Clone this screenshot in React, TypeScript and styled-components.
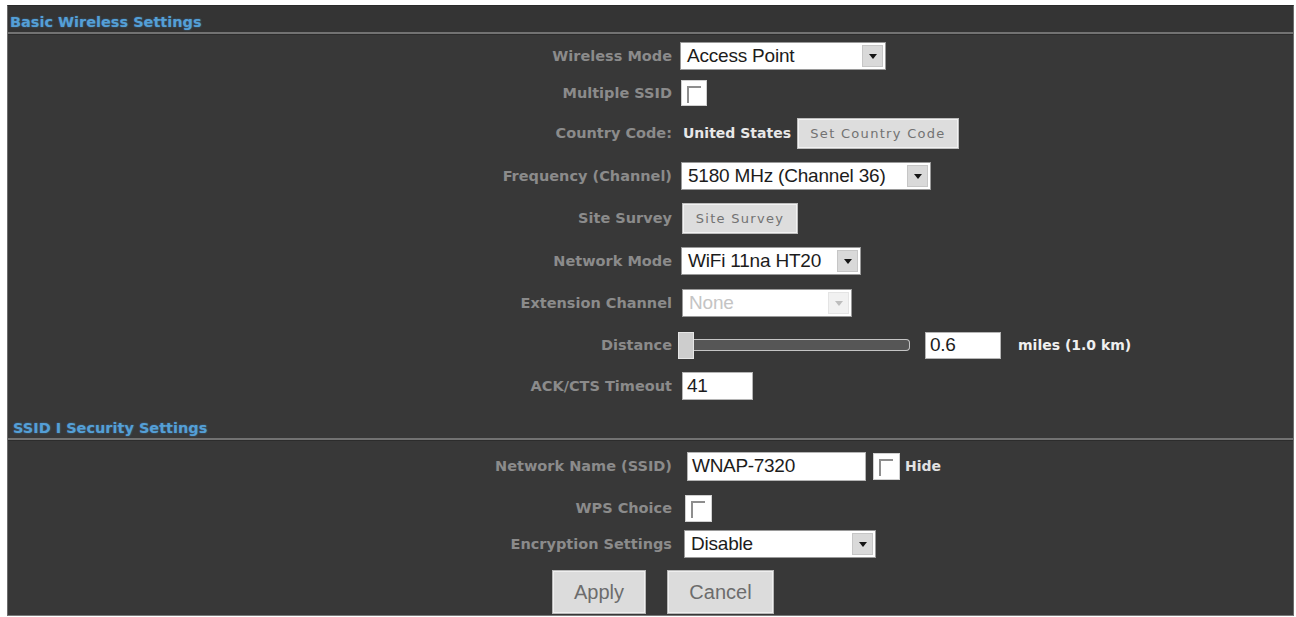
import React from "react";
import styled, { createGlobalStyle } from "styled-components";

const Global = createGlobalStyle`
  html, body { margin: 0; padding: 0; background: #ffffff; }
  body { font-family: "DejaVu Sans", Verdana, sans-serif; }
  * { box-sizing: border-box; }
`;

const Frame = styled.div`
  width: 1296px;
  height: 617px;
  padding: 5px 2px 1px 7px;
  background: #ffffff;
`;

const Panel = styled.div`
  height: 100%;
  background: #383838;
  border-top: 1px solid #2a2a2a;
  border-left: 1px solid #6c6c6c;
  border-right: 1px solid #6c6c6c;
  border-bottom: 1px solid #7a7a7a;
  display: flex;
  flex-direction: column;
`;

const SectionHeader = styled.div<{ $h: number; $pt: number; $indent: number; $bg?: string }>`
  height: ${(p) => p.$h}px;
  padding-top: ${(p) => p.$pt}px;
  padding-left: ${(p) => p.$indent}px;
  background: ${(p) => p.$bg || "transparent"};
  border-bottom: 2px solid #727272;
  box-shadow: 0 1px 0 #2c2c2c;
  font-weight: bold;
  font-size: 14.5px;
  line-height: 19px;
  color: #549fd6;
  text-shadow: 0 0 2px rgba(70, 150, 215, 0.55);
`;

const Row = styled.div<{ $h: number }>`
  height: ${(p) => p.$h}px;
  display: grid;
  grid-template-columns: 664px auto;
  column-gap: 9px;
  align-items: center;
`;

const Label = styled.div`
  text-align: right;
  font-weight: bold;
  font-size: 14.5px;
  color: #8b8b8b;
  white-space: nowrap;
`;

const Controls = styled.div<{ $offset?: number; $gap?: number }>`
  display: flex;
  align-items: center;
  gap: ${(p) => p.$gap ?? 0}px;
  margin-left: ${(p) => p.$offset ?? 0}px;
`;

const SelectBox = styled.div<{ $w: number; $disabled?: boolean }>`
  width: ${(p) => p.$w}px;
  height: 28px;
  background: #ffffff;
  border: 1px solid #9a9a9a;
  display: flex;
  align-items: center;
  padding: 2px;
  font-family: "Liberation Sans", Arial, sans-serif;
  font-size: 19px;
  color: ${(p) => (p.$disabled ? "#c4c4c4" : "#1c1c1c")};
`;

const SelectValue = styled.span`
  flex: 1;
  padding-left: 4px;
  white-space: nowrap;
  overflow: hidden;
  letter-spacing: -0.2px;
`;

const ArrowBox = styled.span<{ $disabled?: boolean }>`
  width: 21px;
  height: 100%;
  background: ${(p) => (p.$disabled ? "#f1f1f1" : "#d9d9d9")};
  border: 1px solid ${(p) => (p.$disabled ? "#e4e4e4" : "#c6c6c6")};
  display: flex;
  align-items: center;
  justify-content: center;
`;

const TextInput = styled.div<{ $w: number; $h?: number }>`
  width: ${(p) => p.$w}px;
  height: ${(p) => p.$h ?? 28}px;
  background: #ffffff;
  border: 1px solid #b5b5b5;
  display: flex;
  align-items: center;
  padding-left: 4px;
  font-family: "Liberation Sans", Arial, sans-serif;
  font-size: 19px;
  color: #1c1c1c;
  letter-spacing: -0.3px;
`;

const Check = styled.span<{ $size?: number }>`
  position: relative;
  display: inline-block;
  width: ${(p) => p.$size ?? 26}px;
  height: ${(p) => p.$size ?? 26}px;
  background: #ffffff;
  border: 1px solid #d0d0d0;
  &::before {
    content: "";
    position: absolute;
    left: 5px;
    top: 5px;
    width: 48%;
    height: 62%;
    border-top: 2px solid #8e8e8e;
    border-left: 2px solid #8e8e8e;
  }
`;

const Strong = styled.span<{ $color?: string; $ml?: number }>`
  font-weight: bold;
  font-size: 14px;
  color: ${(p) => p.$color || "#e8e8e8"};
  margin-left: ${(p) => p.$ml ?? 0}px;
  white-space: nowrap;
`;

const SmallButton = styled.button<{ $w: number }>`
  width: ${(p) => p.$w}px;
  height: 29px;
  background: #dddddd;
  border: 1px solid #f2f2f2;
  outline: 1px solid #bdbdbd;
  font-family: "DejaVu Sans", Verdana, sans-serif;
  font-size: 13px;
  letter-spacing: 1.3px;
  color: #727272;
  padding: 0;
`;

const SliderWrap = styled.div`
  display: flex;
  align-items: center;
`;

const SliderHandle = styled.span`
  width: 16px;
  height: 27px;
  background: #cdcdcd;
  border: 1px solid #e6e6e6;
`;

const SliderTrack = styled.span`
  width: 216px;
  height: 12px;
  background: #565656;
  border: 1px solid #c4c4c4;
  border-left: none;
  border-radius: 0 4px 4px 0;
`;

const ButtonRow = styled.div`
  display: flex;
  gap: 23px;
  padding-left: 545px;
  padding-top: 7px;
`;

const BigButton = styled.button<{ $w: number }>`
  width: ${(p) => p.$w}px;
  height: 42px;
  background: #dcdcdc;
  border: 1px solid #efefef;
  outline: 1px solid #b8b8b8;
  font-family: "Liberation Sans", Arial, sans-serif;
  font-size: 20px;
  color: #6c6c6c;
  padding: 0;
`;

const Arrow = ({ disabled }: { disabled?: boolean }) => (
  <svg width="8" height="5" viewBox="0 0 8 5">
    <path d="M0 0 H8 L4 5 Z" fill={disabled ? "#bdbdbd" : "#151515"} />
  </svg>
);

const Select = ({ w, value, disabled }: { w: number; value: string; disabled?: boolean }) => (
  <SelectBox $w={w} $disabled={disabled}>
    <SelectValue>{value}</SelectValue>
    <ArrowBox $disabled={disabled}>
      <Arrow disabled={disabled} />
    </ArrowBox>
  </SelectBox>
);

export default function App() {
  return (
    <Frame>
      <Global />
      <Panel>
        <SectionHeader $h={28} $pt={7} $indent={2} $bg="#343434">
          Basic Wireless Settings
        </SectionHeader>

        <Row $h={44}>
          <Label>Wireless Mode</Label>
          <Controls $offset={-1}>
            <Select w={206} value="Access Point" />
          </Controls>
        </Row>

        <Row $h={30}>
          <Label>Multiple SSID</Label>
          <Controls>
            <Check />
          </Controls>
        </Row>

        <Row $h={50}>
          <Label>Country Code:</Label>
          <Controls $offset={2} $gap={7}>
            <Strong>United States</Strong>
            <SmallButton $w={160}>Set Country Code</SmallButton>
          </Controls>
        </Row>

        <Row $h={36}>
          <Label>Frequency (Channel)</Label>
          <Controls>
            <Select w={250} value="5180 MHz (Channel 36)" />
          </Controls>
        </Row>

        <Row $h={48}>
          <Label>Site Survey</Label>
          <Controls $offset={2}>
            <SmallButton $w={114}>Site Survey</SmallButton>
          </Controls>
        </Row>

        <Row $h={38}>
          <Label>Network Mode</Label>
          <Controls>
            <Select w={180} value="WiFi 11na HT20" />
          </Controls>
        </Row>

        <Row $h={46}>
          <Label>Extension Channel</Label>
          <Controls $offset={1}>
            <Select w={170} value="None" disabled />
          </Controls>
        </Row>

        <Row $h={38}>
          <Label>Distance</Label>
          <Controls $offset={-3} $gap={15}>
            <SliderWrap>
              <SliderHandle />
              <SliderTrack />
            </SliderWrap>
            <TextInput $w={76} $h={27}>0.6</TextInput>
            <Strong $color="#f0f0f0" $ml={2}>miles (1.0 km)</Strong>
          </Controls>
        </Row>

        <Row $h={44}>
          <Label>ACK/CTS Timeout</Label>
          <Controls $offset={1}>
            <TextInput $w={71}>41</TextInput>
          </Controls>
        </Row>

        <SectionHeader $h={32} $pt={11} $indent={5}>
          SSID I Security Settings
        </SectionHeader>

        <Row $h={52}>
          <Label>Network Name (SSID)</Label>
          <Controls $offset={6} $gap={7}>
            <TextInput $w={179} $h={29}>WNAP-7320</TextInput>
            <Check $size={27} />
            <Strong $color="#e2e2e2" $ml={-2}>Hide</Strong>
          </Controls>
        </Row>

        <Row $h={32}>
          <Label>WPS Choice</Label>
          <Controls $offset={4}>
            <Check $size={27} />
          </Controls>
        </Row>

        <Row $h={40}>
          <Label>Encryption Settings</Label>
          <Controls $offset={3}>
            <Select w={192} value="Disable" />
          </Controls>
        </Row>

        <ButtonRow>
          <BigButton $w={92}>Apply</BigButton>
          <BigButton $w={105}>Cancel</BigButton>
        </ButtonRow>
      </Panel>
    </Frame>
  );
}
